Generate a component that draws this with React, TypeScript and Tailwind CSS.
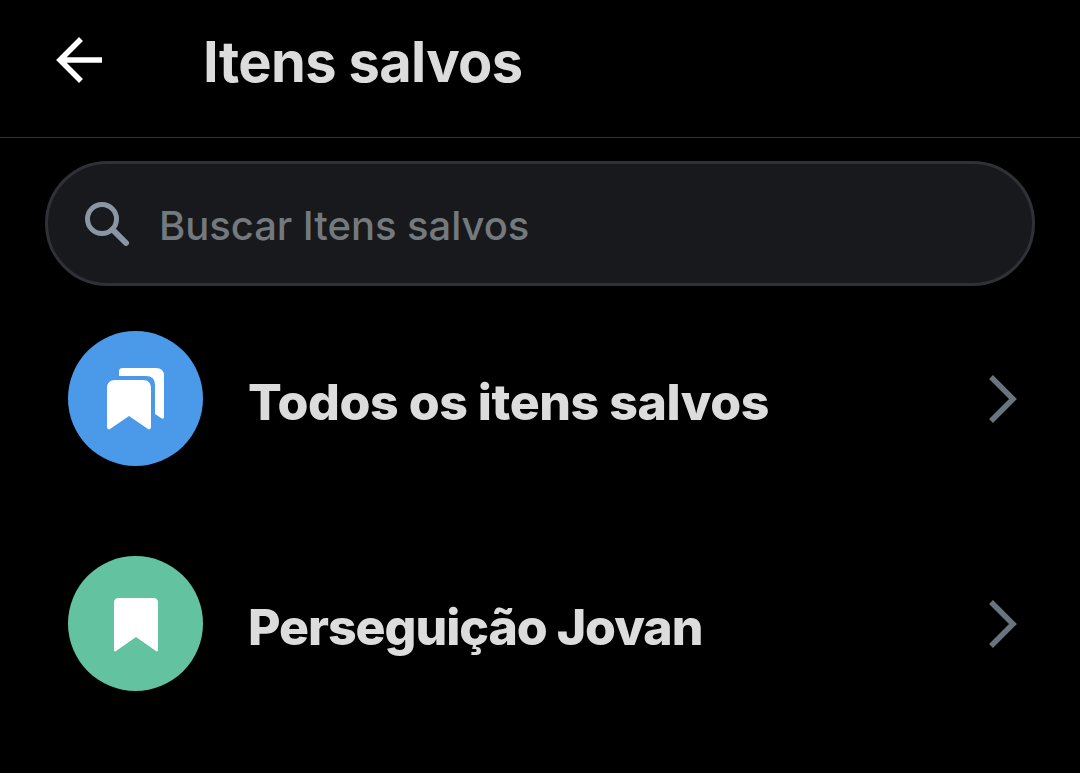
export default function App() {
  const rows = [
    { label: "Todos os itens salvos", color: "bg-[#4b9aea]", double: true, text: "-tracking-[0.45px]" },
    { label: "Perseguição Jovan", color: "bg-[#63c3a0]", double: false, text: "-tracking-[1.05px]" },
  ];
  return (
    <div className="w-[1080px] h-[773px] overflow-hidden bg-black font-['Inter','Liberation_Sans',sans-serif]">
      <header className="h-[138px] border-b border-[#2f3336] flex items-center pl-[56px] pb-[14px]">
        <svg width="48" height="48" viewBox="0 0 48 48" fill="none" className="shrink-0 mb-[3px]">
          <path d="M46 24H5M25 3L4 24l21 21" stroke="#fff" strokeWidth="5.5" />
        </svg>
        <h1 className="ml-[99px] text-[56px] leading-none font-bold text-[#dcdcdc] -tracking-[0.65px]">Itens salvos</h1>
      </header>
      <div className="ml-[45px] mr-[45px] mt-[23px] h-[125px] rounded-full border-[3px] border-[#2f3136] bg-[#17191d] flex items-center pl-[36px]">
        <svg width="46" height="46" viewBox="0 0 46 46" fill="none" className="shrink-0">
          <circle cx="18" cy="18" r="14.5" stroke="#8a96a3" strokeWidth="5" />
          <path d="M28.5 28.5L42 42" stroke="#8a96a3" strokeWidth="6" strokeLinecap="round" />
        </svg>
        <span className="ml-[29px] mt-[4px] text-[40px] leading-none font-medium text-[#74797e] -tracking-[0.05px]">Buscar Itens salvos</span>
      </div>
      <div className="mt-[45px] flex flex-col gap-[90px]">
        {rows.map((r) => (
          <div key={r.label} className="h-[135px] flex items-center pl-[68px] pr-[62px]">
            <div className={`w-[135px] h-[135px] rounded-full shrink-0 flex items-center justify-center ${r.color}`}>
              {r.double ? (
                <svg width="57" height="62" viewBox="0 0 57 62" fill="none">
                  <path d="M12 3Q12 0 16 0H49Q57 0 57 8V49Q57 52 54 50L48 46V17Q48 8 39 8H12Z" fill="#fff" />
                  <path d="M8 12H36C41 12 44 15 44 20V59C44 61 42 62 41 61L22 48 3 61C2 62 0 61 0 59V20C0 15 3 12 8 12Z" fill="#fff" />
                </svg>
              ) : (
                <svg width="44" height="54" viewBox="0 0 44 54" fill="none" className="mt-[2px]">
                  <path d="M4 0H40C42 0 44 2 44 4V52C44 53 43 54 42 53L22 39 2 53C1 54 0 53 0 52V4C0 2 2 0 4 0Z" fill="#fff" />
                </svg>
              )}
            </div>
            <span className={`ml-[45px] mt-[6px] flex-1 text-[50px] leading-none font-extrabold text-[#dcdcdc] ${r.text}`}>{r.label}</span>
            <svg width="30" height="48" viewBox="0 0 30 48" fill="none" className="shrink-0">
              <path d="M3 2l22 22L3 46" stroke="#66757f" strokeWidth="5.5" />
            </svg>
          </div>
        ))}
      </div>
    </div>
  );
}
